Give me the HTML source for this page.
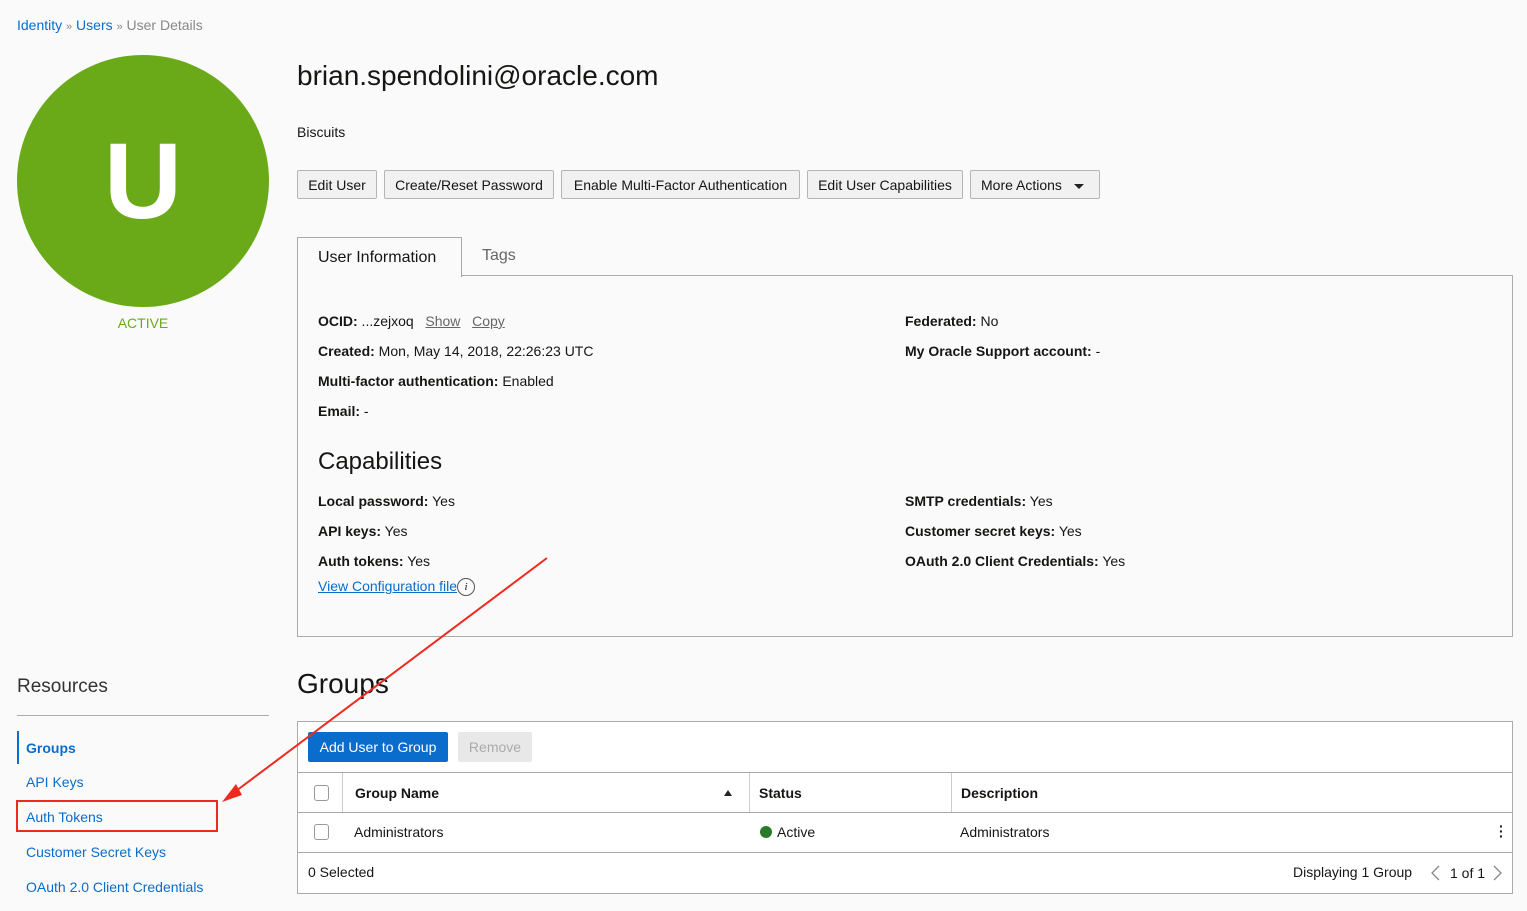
<!DOCTYPE html>
<html><head><style>
body{margin:0;width:1527px;height:911px;background:#fafafa;font-family:"Liberation Sans",sans-serif;color:#161513;position:relative;overflow:hidden;font-size:14px}
.a{position:absolute;white-space:nowrap}
a,.lk{color:#0a6ccb;text-decoration:none}
.btn{position:absolute;top:170px;height:29px;border:1px solid #b5b5b5;border-radius:2px;background:#f1f1f1;font-size:14px;line-height:29px;text-align:center;box-sizing:border-box}
b{font-weight:bold}
.cb{position:absolute;width:13px;height:14px;border:1px solid #999;border-radius:3px;background:#fff}
</style></head><body>
<div class="a" style="left:17px;top:17px;font-size:14px"><span class="lk">Identity</span> <span style="color:#888;font-size:11px">»</span> <span class="lk">Users</span> <span style="color:#888;font-size:11px">»</span> <span style="color:#888">User Details</span></div>
<div class="a" style="left:17px;top:55px;width:252px;height:252px;border-radius:50%;background:#6aaa19;color:#fff;font-size:108px;font-weight:bold;text-align:center;line-height:252px">U</div>
<div class="a" style="left:0;width:286px;top:315px;text-align:center;color:#6aaa19;font-size:14px">ACTIVE</div>
<div class="a" style="left:297px;top:60px;font-size:28px">brian.spendolini@oracle.com</div>
<div class="a" style="left:297px;top:124px">Biscuits</div>
<div class="btn" style="left:297px;width:80px">Edit User</div>
<div class="btn" style="left:384px;width:170px">Create/Reset Password</div>
<div class="btn" style="left:561px;width:239px">Enable Multi-Factor Authentication</div>
<div class="btn" style="left:807px;width:156px">Edit User Capabilities</div>
<div class="btn" style="left:970px;width:130px;text-align:left;padding-left:10px">More Actions <span style="display:inline-block;margin-left:8px;border-left:5px solid transparent;border-right:5px solid transparent;border-top:5px solid #222;vertical-align:middle"></span></div>
<div class="a" style="left:297px;top:275px;width:1216px;height:362px;border:1px solid #aaa;box-sizing:border-box;background:#fafafa"></div>
<div class="a" style="left:297px;top:237px;width:165px;height:40px;border:1px solid #aaa;border-bottom:none;background:#fafafa;box-sizing:border-box;font-size:16px;line-height:40px;padding-left:20px">User Information</div>
<div class="a" style="left:482px;top:247px;font-size:16px;color:#666">Tags</div>
<div class="a" style="left:318px;top:313px"><b>OCID:</b> ...zejxoq &nbsp; <u style="color:#666">Show</u> &nbsp; <u style="color:#666">Copy</u></div>
<div class="a" style="left:318px;top:343px"><b>Created:</b> Mon, May 14, 2018, 22:26:23 UTC</div>
<div class="a" style="left:318px;top:373px"><b>Multi-factor authentication:</b> Enabled</div>
<div class="a" style="left:318px;top:403px"><b>Email:</b> -</div>
<div class="a" style="left:905px;top:313px"><b>Federated:</b> No</div>
<div class="a" style="left:905px;top:343px"><b>My Oracle Support account:</b> -</div>
<div class="a" style="left:318px;top:448px;font-size:24px">Capabilities</div>
<div class="a" style="left:318px;top:493px"><b>Local password:</b> Yes</div>
<div class="a" style="left:318px;top:523px"><b>API keys:</b> Yes</div>
<div class="a" style="left:318px;top:553px"><b>Auth tokens:</b> Yes</div>
<div class="a" style="left:318px;top:578px"><span class="lk" style="text-decoration:underline">View Configuration file</span><span style="display:inline-block;width:16px;height:16px;border:1px solid #555;border-radius:50%;font-size:11px;text-align:center;line-height:16px;font-style:italic;font-family:'Liberation Serif';vertical-align:middle">i</span></div>
<div class="a" style="left:905px;top:493px"><b>SMTP credentials:</b> Yes</div>
<div class="a" style="left:905px;top:523px"><b>Customer secret keys:</b> Yes</div>
<div class="a" style="left:905px;top:553px"><b>OAuth 2.0 Client Credentials:</b> Yes</div>
<div class="a" style="left:17px;top:676px;font-size:19px;color:#333">Resources</div>
<div class="a" style="left:17px;top:715px;width:252px;border-top:1px solid #aaa"></div>
<div class="a" style="left:17px;top:731px;width:2px;height:33px;background:#0a6ccb"></div>
<div class="a lk" style="left:26px;top:740px;font-weight:bold">Groups</div>
<div class="a lk" style="left:26px;top:774px">API Keys</div>
<div class="a lk" style="left:26px;top:809px">Auth Tokens</div>
<div class="a" style="left:16px;top:800px;width:202px;height:32px;border:2px solid #ee2a1f;box-sizing:border-box"></div>
<div class="a lk" style="left:26px;top:844px">Customer Secret Keys</div>
<div class="a lk" style="left:26px;top:879px">OAuth 2.0 Client Credentials</div>
<div class="a" style="left:297px;top:668px;font-size:28px">Groups</div>
<div class="a" style="left:297px;top:721px;width:1216px;height:173px;border:1px solid #aaa;box-sizing:border-box;background:#fff"></div>
<div class="a" style="left:308px;top:732px;width:140px;height:30px;background:#0a6ccb;color:#fff;border-radius:2px;text-align:center;line-height:30px">Add User to Group</div>
<div class="a" style="left:458px;top:732px;width:74px;height:30px;background:#e8e8e8;color:#aaa;border-radius:2px;text-align:center;line-height:30px">Remove</div>
<div class="a" style="left:298px;top:772px;width:1214px;border-top:1px solid #aaa"></div>
<div class="a" style="left:298px;top:812px;width:1214px;border-top:1px solid #aaa"></div>
<div class="a" style="left:298px;top:852px;width:1214px;border-top:1px solid #aaa"></div>
<div class="a" style="left:342px;top:773px;height:39px;border-left:1px solid #ccc"></div>
<div class="a" style="left:749px;top:773px;height:39px;border-left:1px solid #ccc"></div>
<div class="a" style="left:951px;top:773px;height:39px;border-left:1px solid #ccc"></div>
<div class="cb" style="left:314px;top:785px"></div>
<div class="cb" style="left:314px;top:824px"></div>
<div class="a" style="left:355px;top:785px;font-weight:bold">Group Name</div>
<div class="a" style="left:724px;top:790px;border-left:4px solid transparent;border-right:4px solid transparent;border-bottom:6px solid #222"></div>
<div class="a" style="left:759px;top:785px;font-weight:bold">Status</div>
<div class="a" style="left:961px;top:785px;font-weight:bold">Description</div>
<div class="a" style="left:354px;top:824px">Administrators</div>
<div class="a" style="left:760px;top:826px;width:12px;height:12px;border-radius:50%;background:#2b7a2b"></div>
<div class="a" style="left:777px;top:824px">Active</div>
<div class="a" style="left:960px;top:824px">Administrators</div>
<div class="a" style="left:1499px;top:824px;font-weight:bold;line-height:5px;font-size:14px">·<br>·<br>·</div>
<div class="a" style="left:308px;top:864px">0 Selected</div>
<div class="a" style="left:1293px;top:864px">Displaying 1 Group</div>
<svg class="a" style="left:1428px;top:864px" width="80" height="20"><polyline points="11,2 4,9 11,16" fill="none" stroke="#888" stroke-width="1.3"/><text x="22" y="14" font-family="Liberation Sans" font-size="14" fill="#161513">1 of 1</text><polyline points="66,2 73,9 66,16" fill="none" stroke="#888" stroke-width="1.3"/></svg>
<svg class="a" style="left:0;top:0" width="1527" height="911"><line x1="547" y1="558" x2="232" y2="794" stroke="#ee2a1f" stroke-width="2"/><polygon points="222,802 236,784 242,795" fill="#ee2a1f"/></svg>
</body></html>
